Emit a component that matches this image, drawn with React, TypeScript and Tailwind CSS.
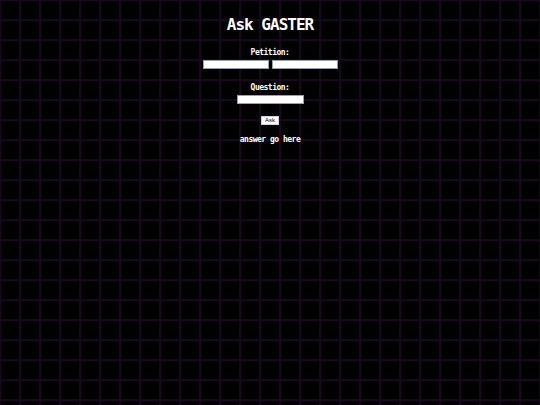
export default function App() {
  return (
    <div
      className="w-[540px] h-[405px] bg-black flex flex-col items-center text-white font-['DejaVu_Sans_Mono',monospace] font-bold"
      style={{
        backgroundImage:
          "linear-gradient(to right, rgb(26,6,30) 2px, transparent 2px), linear-gradient(to bottom, rgb(26,6,30) 2px, transparent 2px)",
        backgroundSize: "20px 20px",
        backgroundPosition: "19px 19px",
      }}
    >
      <h1 className="mt-[16px] text-[16px] leading-[18px] tracking-[-1px]">Ask GASTER</h1>

      <label className="mt-[14px] text-[8px] leading-[10px] tracking-[-0.5px]">Petition:</label>
      <div className="mt-[2px] flex gap-[3px]">
        <input className="w-[66px] h-[9px] bg-white border border-gray-400" />
        <input className="w-[66px] h-[9px] bg-white border border-gray-400" />
      </div>

      <label className="mt-[14px] text-[8px] leading-[10px] tracking-[-0.5px]">Question:</label>
      <input className="mt-[2px] w-[67px] h-[9px] bg-white border border-gray-400" />

      <button className="mt-[12px] h-[9px] px-[3px] bg-white border border-gray-300 text-black text-[6px] leading-[7px] font-normal font-['Liberation_Sans',sans-serif]">
        Ask
      </button>

      <p className="mt-[10px] text-[8px] leading-[10px] tracking-[-0.5px]">answer go here</p>
    </div>
  );
}
